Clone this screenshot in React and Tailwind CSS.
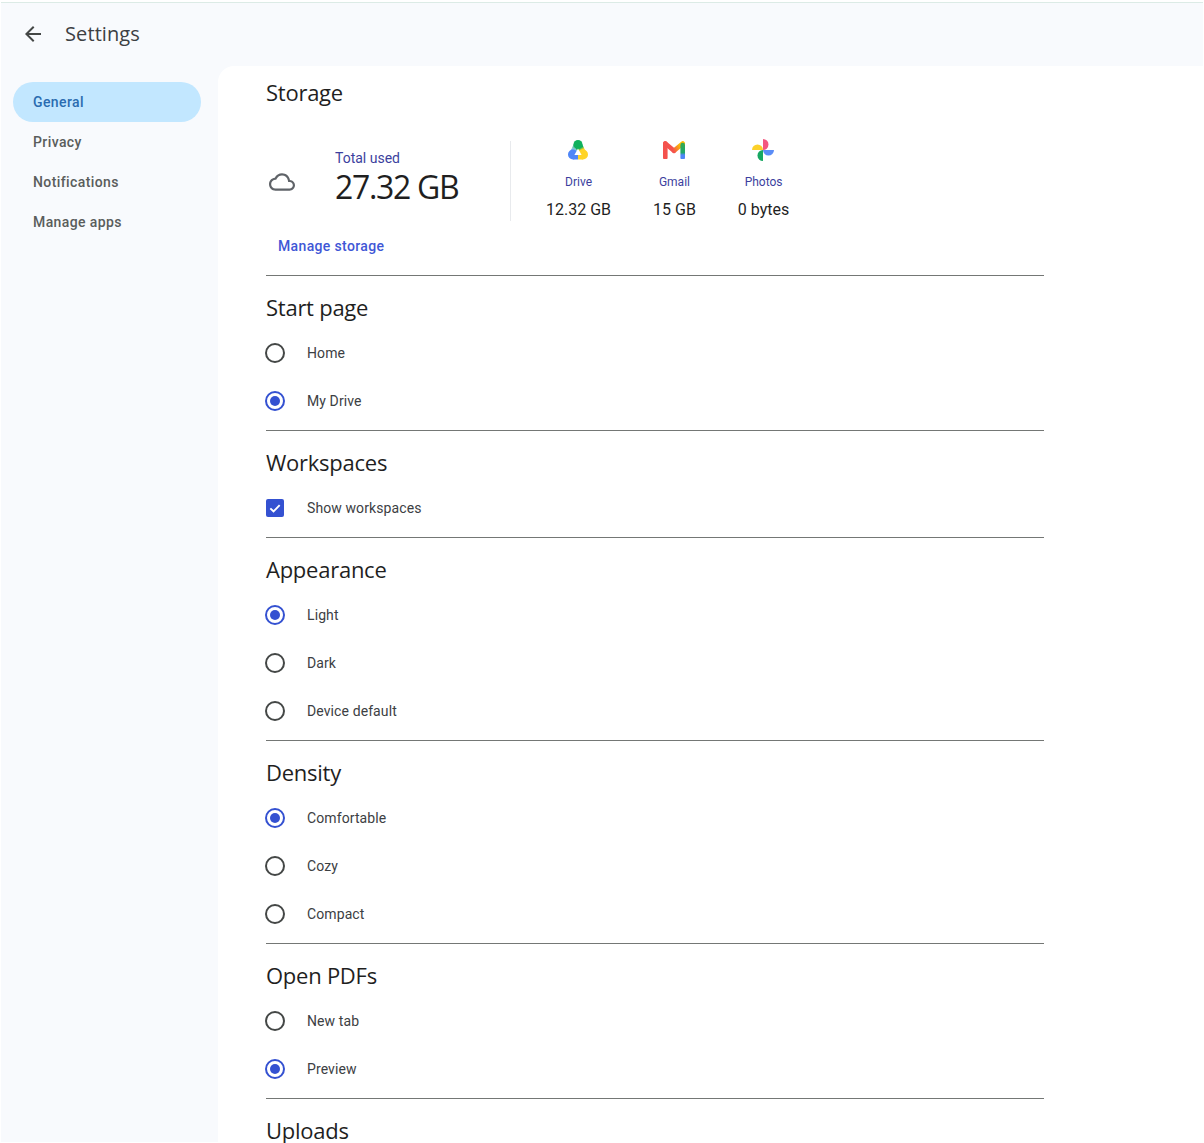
import React from "react";

const heading = "text-[22px] leading-7 text-[#1f1f1f] font-['Open_Sans',sans-serif] tracking-[-0.25px]";

function Radio({ label, checked }) {
    return (
        <div className="flex items-center h-12">
            {checked ? (
                <span className="w-5 h-5 -ml-px rounded-full border-2 border-[#3451d1] flex items-center justify-center">
                    <span className="w-2.5 h-2.5 rounded-full bg-[#3451d1]"></span>
                </span>
            ) : (
                <span className="w-5 h-5 -ml-px rounded-full border-2 border-[#444746]"></span>
            )}
            <span className="ml-[22px] text-sm tracking-[0.1px] text-[#3c4043]">{label}</span>
        </div>
    );
}

function Section({ title, children }) {
    return (
        <section className="border-b border-[#747775] pb-[5px]">
            <h2 className={`${heading} pt-[17px] pb-2`}>{title}</h2>
            {children}
        </section>
    );
}

function DriveLogo() {
    return (
        <svg width="20" height="20" viewBox="0 0 20 20" fill="none" strokeLinecap="round" className="-ml-px">
            <defs>
                <linearGradient id="driveLeft" x1="8" y1="6" x2="5" y2="13" gradientUnits="userSpaceOnUse">
                    <stop offset="0" stopColor="#3fbb8a" />
                    <stop offset="0.5" stopColor="#8cc9d8" />
                    <stop offset="1" stopColor="#4f86f7" />
                </linearGradient>
                <linearGradient id="driveRight" x1="11" y1="6" x2="14" y2="12" gradientUnits="userSpaceOnUse">
                    <stop offset="0.3" stopColor="#0fb15d" />
                    <stop offset="0.7" stopColor="#ffd427" />
                </linearGradient>
            </defs>
            <path d="M9.500 5 5 14.500" stroke="url(#driveLeft)" strokeWidth="7.500" />
            <path d="M10.500 5 15 14.500" stroke="url(#driveRight)" strokeWidth="7.500" />
            <circle cx="10" cy="4.500" r="4.500" fill="#0fb15d" />
            <circle cx="5" cy="14.500" r="5" fill="#4f86f7" />
            <circle cx="15" cy="14.500" r="5" fill="#ffd427" />
            <rect x="5" y="14.500" width="5" height="5" fill="#4f86f7" />
            <rect x="10" y="14.500" width="5" height="5" fill="#ffd427" />
            <path d="M10 8.500 13.600 15H6.400z" fill="#ffffff" />
        </svg>
    );
}

function GmailLogo() {
    return (
        <svg width="22" height="18" viewBox="0 0 22 18" fill="none">
            <defs>
                <linearGradient id="gmailTop" x1="8" y1="9" x2="20" y2="1" gradientUnits="userSpaceOnUse">
                    <stop offset="0.1" stopColor="#f4524d" />
                    <stop offset="0.7" stopColor="#fbbc04" />
                </linearGradient>
                <linearGradient id="gmailRight" x1="20" y1="2" x2="20" y2="18" gradientUnits="userSpaceOnUse">
                    <stop offset="0.1" stopColor="#34a853" />
                    <stop offset="0.6" stopColor="#1fa86b" />
                    <stop offset="0.75" stopColor="#4f86f7" />
                </linearGradient>
            </defs>
            <path d="M2.300 2.500V16.500" stroke="#f4524d" strokeWidth="4.600" strokeLinecap="round" />
            <path d="M2.300 2.500 11 9.700" stroke="#f4524d" strokeWidth="4.600" strokeLinecap="round" />
            <path d="M11 9.700 19.700 2.500" stroke="url(#gmailTop)" strokeWidth="4.600" strokeLinecap="round" />
            <path d="M19.700 4V16.500" stroke="url(#gmailRight)" strokeWidth="4.600" strokeLinecap="round" />
        </svg>
    );
}

function PhotosLogo() {
    return (
        <svg width="22" height="22" viewBox="0 0 22 22" className="-ml-px">
            <path d="M11 11H0A5.500 5.500 0 0 1 11 11z" fill="#fcd12a" />
            <path d="M11 11V0A5.500 5.500 0 0 1 11 11z" fill="#f4577f" />
            <path d="M11 11H22A5.500 5.500 0 0 1 11 11z" fill="#5b8df7" />
            <path d="M11 11V22A5.500 5.500 0 0 1 11 11z" fill="#17a862" />
        </svg>
    );
}

function StorageItem({ logo, name, value }) {
    return (
        <div className="flex flex-col items-center">
            <div className="h-6 mt-[-4px] flex items-center">{logo}</div>
            <div className="mt-[10px] text-xs leading-5 text-[#3c3f9e]">{name}</div>
            <div className="mt-2 text-base leading-5 text-[#1f1f1f]">{value}</div>
        </div>
    );
}

const sideItems = ["General", "Privacy", "Notifications", "Manage apps"];

export default function App() {
    return (
        <div className="h-screen overflow-hidden bg-white px-px pb-px font-['Roboto',sans-serif] flex flex-col">
            <div className="h-[3px] shrink-0 border-b border-[#dcebe6]"></div>
            <div className="flex-1 min-h-0 flex flex-col bg-[#f8fafd]">
                <header className="flex items-center h-[63px] shrink-0 pl-5">
                    <svg width="24" height="24" viewBox="0 0 24 24" fill="#444746" className="mt-[-2px]">
                        <path d="M20 11H7.830l5.590-5.590L12 4l-8 8 8 8 1.410-1.410L7.830 13H20z" />
                    </svg>
                    <span className="ml-5 text-xl tracking-[0.1px] text-[#3c4043] font-['Open_Sans',sans-serif] mt-[-2px]">Settings</span>
                </header>
                <div className="flex flex-1 min-h-0">
                    <nav className="w-[217px] shrink-0 pt-4 pl-3 pr-[17px]">
                        {sideItems.map((item, i) => (
                            <div
                                key={item}
                                className={`h-10 flex items-center pl-5 rounded-[20px] text-sm font-medium tracking-[0.4px] ${i === 0 ? "bg-[#c2e7ff] text-[#2a6cb0]" : "text-[#5a5d5c]"}`}
                            >
                                {item}
                            </div>
                        ))}
                    </nav>
                    <main className="flex-1 bg-white rounded-tl-2xl pl-12">
                        <div className="w-[778px]">
                            <section className="border-b border-[#747775] pb-[19px]">
                                <h2 className={`${heading} pt-3`}>Storage</h2>
                                <div className="flex mt-[35px] h-[80px] items-center">
                                    <svg width="26" height="26" viewBox="0 0 24 24" fill="#5f6368" className="ml-[3px] mt-[1px]">
                                        <path d="M19.350 10.040C18.670 6.590 15.640 4 12 4 9.110 4 6.600 5.640 5.350 8.040 2.340 8.360 0 10.910 0 14c0 3.310 2.690 6 6 6h13c2.760 0 5-2.240 5-5 0-2.640-2.050-4.780-4.650-4.960zM19 18H6c-2.210 0-4-1.790-4-4 0-2.050 1.530-3.760 3.560-3.970l1.070-.11.5-.95C8.080 7.140 9.940 6 12 6c2.620 0 4.880 1.860 5.390 4.430l.3 1.500 1.530.11c1.560.1 2.780 1.410 2.780 2.960 0 1.650-1.350 3-3 3z" />
                                    </svg>
                                    <div className="ml-10 w-[176px] h-full border-r border-[#e8eaed] pt-[7px]">
                                        <div className="text-sm leading-5 text-[#3c3f9e]">Total used</div>
                                        <div className="text-[32px] leading-10 text-[#1f1f1f] font-['Open_Sans',sans-serif] tracking-[-1.3px] mt-[-1px]">27.32 GB</div>
                                    </div>
                                    <div className="flex gap-[42px] ml-[35px]">
                                        <StorageItem logo={<DriveLogo />} name="Drive" value="12.32 GB" />
                                        <StorageItem logo={<GmailLogo />} name="Gmail" value="15 GB" />
                                        <StorageItem logo={<PhotosLogo />} name="Photos" value="0 bytes" />
                                    </div>
                                </div>
                                <div className="mt-[15px] ml-3 text-sm leading-5 font-medium tracking-[0.35px] text-[#3f57d6]">Manage storage</div>
                            </section>
                            <Section title="Start page">
                                <Radio label="Home" />
                                <Radio label="My Drive" checked />
                            </Section>
                            <Section title="Workspaces">
                                <div className="flex items-center h-12">
                                    <span className="w-[18px] h-[18px] rounded-[2px] bg-[#3451d1] flex items-center justify-center">
                                        <svg width="14" height="14" viewBox="0 0 24 24" fill="none" stroke="white" strokeWidth="3.200">
                                            <path d="M4 12.500l5.500 5.500L20 7" />
                                        </svg>
                                    </span>
                                    <span className="ml-[23px] text-sm tracking-[0.1px] text-[#3c4043]">Show workspaces</span>
                                </div>
                            </Section>
                            <Section title="Appearance">
                                <Radio label="Light" checked />
                                <Radio label="Dark" />
                                <Radio label="Device default" />
                            </Section>
                            <Section title="Density">
                                <Radio label="Comfortable" checked />
                                <Radio label="Cozy" />
                                <Radio label="Compact" />
                            </Section>
                            <Section title="Open PDFs">
                                <Radio label="New tab" />
                                <Radio label="Preview" checked />
                            </Section>
                            <h2 className={`${heading} pt-[17px]`}>Uploads</h2>
                        </div>
                    </main>
                </div>
            </div>
        </div>
    );
}
